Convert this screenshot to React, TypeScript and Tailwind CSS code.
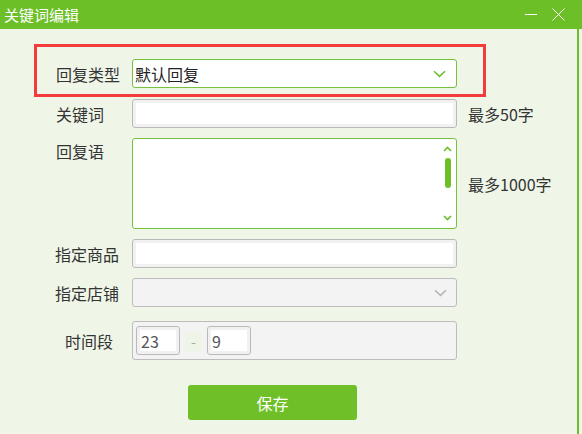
import React from "react";

const Chevron = ({ color }: { color: string }) => (
  <svg width="13" height="8" viewBox="0 0 13 8" fill="none">
    <path d="M1 1.2 L6.5 6.4 L12 1.2" stroke={color} strokeWidth="1.5" />
  </svg>
);

const TextInput = ({ className = "" }: { className?: string }) => (
  <div
    className={`h-[29px] rounded-[3px] border border-[#b9b9b9] bg-white shadow-[inset_0_0_0_3px_#f1f1f1] ${className}`}
  />
);

export default function App() {
  return (
    <div className="w-[582px] h-[434px] bg-[#eff6e8] flex flex-col font-['Noto_Sans_CJK_SC','Microsoft_YaHei',sans-serif] text-[#333] overflow-hidden">
      {/* title bar */}
      <div className="h-[29px] bg-[#6dbf27] flex items-center shrink-0">
        <span className="ml-[4px] text-[15px] leading-[20px] text-white">
          关键词编辑
        </span>
        <div className="ml-auto flex items-center">
          <svg width="13" height="13" viewBox="0 0 13 13" className="mr-[14px]">
            <path d="M0 6.5 H12" stroke="white" strokeWidth="1" />
          </svg>
          <svg width="13" height="13" viewBox="0 0 13 13" className="mr-[17px]">
            <path d="M0.5 0.5 L12.5 12.5 M12.5 0.5 L0.5 12.5" stroke="white" strokeWidth="1" />
          </svg>
        </div>
      </div>

      {/* body */}
      <div className="flex-1 mr-[3px] border-r-2 border-[#6dbf27] text-[16px] leading-[20px]">
        {/* highlighted row */}
        <div className="mt-[15px] ml-[34px] w-[452px] h-[53px] border-[3px] border-[#f53c3c] flex items-start pt-[12px] pl-[19px]">
          <div className="w-[76px] h-[29px] flex items-center">回复类型</div>
          <div className="w-[325px] h-[29px] rounded-[3px] border border-[#78c140] bg-white flex items-center pl-[2px] pr-[10px]">
            <span className="text-[#222]">默认回复</span>
            <span className="ml-auto flex">
              <Chevron color="#6cbf2a" />
            </span>
          </div>
        </div>

        <div className="mt-[2px] flex items-center pl-[56px]">
          <div className="w-[76px]">关键词</div>
          <TextInput className="w-[325px] h-[28px]" />
          <div className="ml-[11px]">最多50字</div>
        </div>

        <div className="mt-[10px] flex items-center pl-[56px]">
          <div className="w-[76px] self-start pt-[3px]">回复语</div>
          <div className="w-[325px] h-[91px] rounded-[3px] border border-[#78c140] bg-white flex">
            <div className="flex-1" />
            <div className="w-[15px] mr-[1px] flex flex-col items-center pt-[7px] pb-[7px]">
              <svg width="9" height="6" viewBox="0 0 9 6" fill="none">
                <path d="M1 5 L4.5 1.5 L8 5" stroke="#6cbf2a" strokeWidth="1.6" />
              </svg>
              <div className="mt-[6px] w-[6px] h-[30px] rounded-full bg-[#6dbf27]" />
              <div className="flex-1" />
              <svg width="9" height="6" viewBox="0 0 9 6" fill="none">
                <path d="M1 1 L4.5 4.5 L8 1" stroke="#6cbf2a" strokeWidth="1.6" />
              </svg>
            </div>
          </div>
          <div className="ml-[11px]">最多1000字</div>
        </div>

        <div className="mt-[10px] flex items-center pl-[56px]">
          <div className="w-[76px] -ml-[1px] pl-[0px]">指定商品</div>
          <TextInput className="w-[325px] ml-[1px]" />
        </div>

        <div className="mt-[10px] flex items-center pl-[56px]">
          <div className="w-[76px] -ml-[1px]">指定店铺</div>
          <div className="w-[325px] h-[29px] ml-[1px] rounded-[3px] border border-[#bcbcbc] bg-[#f3f3f3] flex items-center justify-end pr-[9px]">
            <Chevron color="#b4b4b4" />
          </div>
        </div>

        <div className="mt-[14px] flex items-center pl-[56px]">
          <div className="w-[76px] pl-[9px]">时间段</div>
          <div className="w-[325px] h-[39px] rounded-[3px] border border-[#bcbcbc] bg-[#f3f3f3] flex items-center pl-[3px]">
            <div className="w-[44px] h-[29px] rounded-[3px] border border-[#b9b9b9] bg-white shadow-[inset_0_0_0_3px_#f1f1f1] flex items-center pl-[4px] text-[#555]">
              23
            </div>
            <div className="ml-[5px] w-[17px] h-[20px] bg-[#eef5e6] flex items-center justify-center text-[#aaa] text-[14px]">
              -
            </div>
            <div className="ml-[5px] w-[44px] h-[29px] rounded-[3px] border border-[#b9b9b9] bg-white shadow-[inset_0_0_0_3px_#f1f1f1] flex items-center pl-[4px] text-[#555]">
              9
            </div>
          </div>
        </div>

        <div className="mt-[25px] ml-[188px] w-[169px] h-[35px] rounded-[3px] bg-[#6fbf28] flex items-center justify-center text-white">
          保存
        </div>
      </div>
    </div>
  );
}
